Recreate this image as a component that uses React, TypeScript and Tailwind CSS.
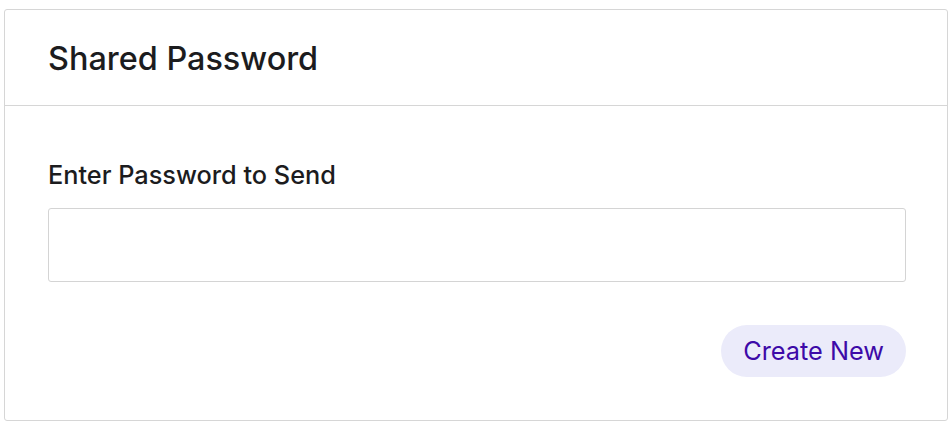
import React from "react";

export default function App() {
  return (
    <div className="w-[952px] h-[426px] bg-white pt-[9px] px-[4px] pb-[5px]" style={{ fontFamily: "Inter, 'Noto Sans', sans-serif" }}>
      <div className="h-[412px] border border-[#d6d6d6] rounded-[3px] flex flex-col">
        <div className="h-[96px] border-b border-[#d6d6d6] flex items-center pl-[43px] pr-[41px] pt-[3px]">
          <h1 className="text-[32.4px] font-medium text-[#1c1c1e]">Shared Password</h1>
        </div>
        <div className="pl-[43px] pr-[41px] pt-[54px]">
          <label className="block text-[25.3px] font-medium text-[#1c1c1e] leading-[30px]">Enter Password to Send</label>
          <input type="password" className="mt-[18px] block w-full h-[74px] border border-[#d4d4d4] rounded-[3px] outline-none" />
          <div className="flex justify-end mt-[43px]">
            <button className="h-[52px] px-[22px] rounded-full bg-[#ebebfa] text-[#3d0aa8] text-[25.3px] leading-none">Create New</button>
          </div>
        </div>
      </div>
    </div>
  );
}
